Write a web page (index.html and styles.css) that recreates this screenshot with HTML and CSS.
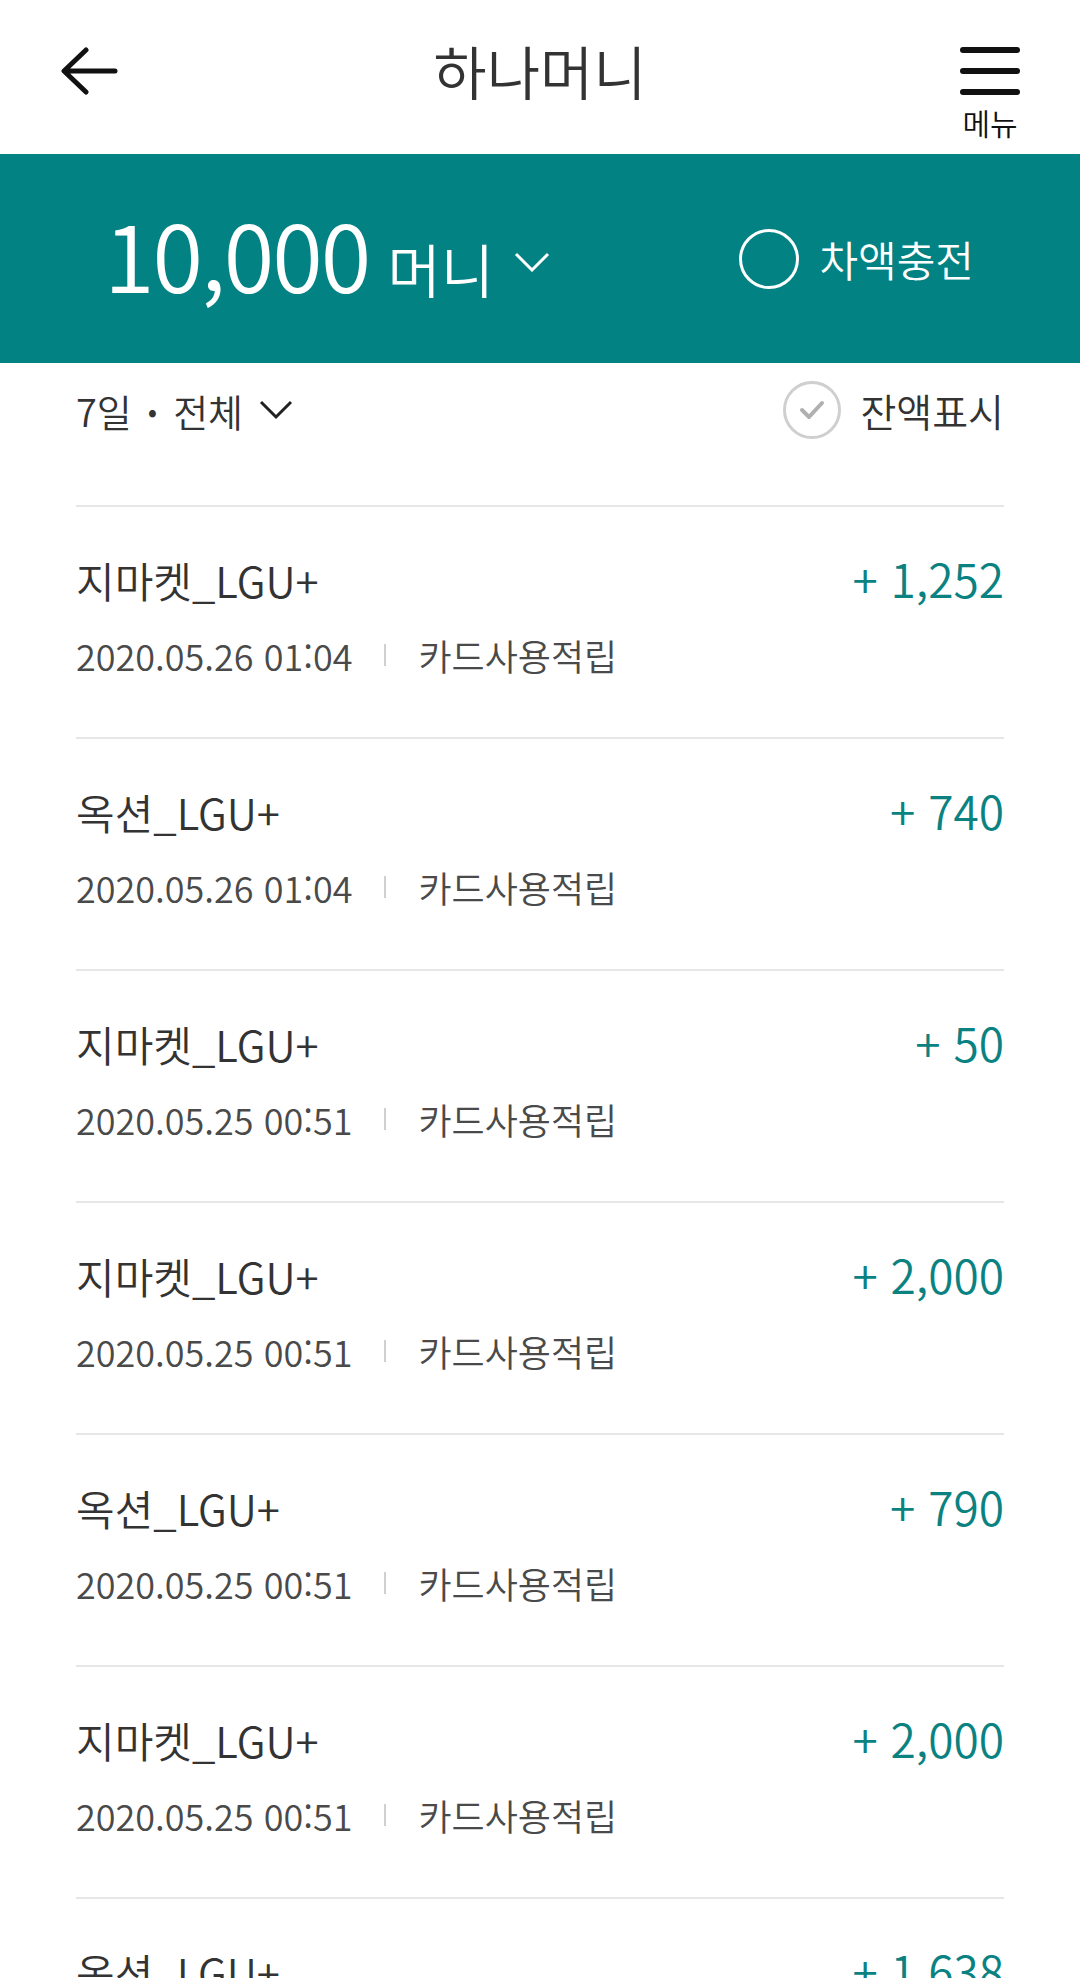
FILE: index.html
```html
<!DOCTYPE html>
<html lang="ko">
<head>
  <meta charset="UTF-8" />
  <meta name="viewport" content="width=device-width, initial-scale=1" />
  <title>하나머니</title>
  <link rel="stylesheet" href="styles.css">
</head>
<body>
  <div class="topbar">
    <button class="back" type="button" aria-label="뒤로">
      <svg width="58" height="48" viewBox="0 0 58 48">
        <path d="M55 24 H5 M26 3 L4 24 L26 45" fill="none" stroke="#111" stroke-width="5" stroke-linecap="round" stroke-linejoin="round" />
      </svg>
    </button>
    <h1 class="title">하나머니</h1>
    <div class="menu">
      <span class="bar"></span>
      <span class="bar"></span>
      <span class="bar"></span>
      <span class="menu-label">메뉴</span>
    </div>
  </div>

  <div class="balance">
    <div class="balance-left">
      <span class="amount">10,000</span>
      <span class="unit">머니</span>
      <svg class="chevron" width="36" height="20" viewBox="0 0 36 20">
        <polyline points="2,2 18,18 34,2" fill="none" stroke="#fff" stroke-width="3" />
      </svg>
    </div>
    <label class="charge">
      <span class="ring"></span>
      <span>차액충전</span>
    </label>
  </div>

  <div class="filter">
    <div class="period">
      <span>7일</span>
      <span class="dot">•</span>
      <span>전체</span>
      <svg width="34" height="20" viewBox="0 0 34 20">
        <polyline points="2,2 17,17 32,2" fill="none" stroke="#222" stroke-width="3" />
      </svg>
    </div>
    <div class="show-balance">
      <svg width="60" height="60" viewBox="0 0 60 60">
        <circle cx="30" cy="30" r="27.5" fill="none" stroke="#cfcfcf" stroke-width="3" />
        <path d="M20 30 L27 37 L40 23" fill="none" stroke="#b0b0b0" stroke-width="4" stroke-linecap="round" stroke-linejoin="round" />
      </svg>
      <span>잔액표시</span>
    </div>
  </div>

  <ul class="history">
    <li class="item">
      <div class="row">
        <span class="name">지마켓_LGU+</span>
        <span class="plus">+ 1,252</span>
      </div>
      <div class="meta"><span class="date">2020.05.26 01:04</span><i class="sep"></i><span>카드사용적립</span></div>
    </li>
    <li class="item">
      <div class="row">
        <span class="name">옥션_LGU+</span>
        <span class="plus">+ 740</span>
      </div>
      <div class="meta"><span class="date">2020.05.26 01:04</span><i class="sep"></i><span>카드사용적립</span></div>
    </li>
    <li class="item">
      <div class="row">
        <span class="name">지마켓_LGU+</span>
        <span class="plus">+ 50</span>
      </div>
      <div class="meta"><span class="date">2020.05.25 00:51</span><i class="sep"></i><span>카드사용적립</span></div>
    </li>
    <li class="item">
      <div class="row">
        <span class="name">지마켓_LGU+</span>
        <span class="plus">+ 2,000</span>
      </div>
      <div class="meta"><span class="date">2020.05.25 00:51</span><i class="sep"></i><span>카드사용적립</span></div>
    </li>
    <li class="item">
      <div class="row">
        <span class="name">옥션_LGU+</span>
        <span class="plus">+ 790</span>
      </div>
      <div class="meta"><span class="date">2020.05.25 00:51</span><i class="sep"></i><span>카드사용적립</span></div>
    </li>
    <li class="item">
      <div class="row">
        <span class="name">지마켓_LGU+</span>
        <span class="plus">+ 2,000</span>
      </div>
      <div class="meta"><span class="date">2020.05.25 00:51</span><i class="sep"></i><span>카드사용적립</span></div>
    </li>
    <li class="item">
      <div class="row">
        <span class="name">옥션_LGU+</span>
        <span class="plus">+ 1,638</span>
      </div>
      <div class="meta"><span class="date">2020.05.25 00:51</span><i class="sep"></i><span>카드사용적립</span></div>
    </li>
  </ul>
</body>
</html>
```

FILE: styles.css
```css
/* Reset */
* {
  margin: 0;
  padding: 0;
  box-sizing: border-box;
}
body {
  font-family: "Noto Sans CJK KR", "Noto Sans", sans-serif;
  font-weight: 350;
  background: #fff;
  color: #333;
  width: 1080px;
  overflow: hidden;
}

/* Top bar */
.topbar {
  height: 154px;
  display: grid;
  grid-template-columns: 1fr auto 1fr;
  align-items: start;
  padding: 40px 60px 0;
}
.back {
  justify-self: start;
  margin-top: 7px;
  background: none;
  border: none;
  display: block;
}
.back svg {
  display: block;
}
.title {
  font-size: 58px;
  font-weight: 350;
  line-height: 60px;
  color: #333;
}
.menu {
  justify-self: end;
  margin-top: 7px;
  width: 60px;
  display: flex;
  flex-direction: column;
  align-items: center;
  gap: 15px;
}
.bar {
  display: block;
  width: 60px;
  height: 6px;
  border-radius: 3px;
  background: #111;
}
.menu-label {
  font-size: 30px;
  line-height: 32px;
  color: #111;
  margin-top: -4px;
  white-space: nowrap;
}

/* Balance bar */
.balance {
  height: 209px;
  background: #038284;
  color: #fff;
  display: flex;
  align-items: center;
  justify-content: space-between;
  padding: 0 106px 0 104px;
}
.balance-left {
  display: flex;
  align-items: baseline;
}
.amount {
  font-size: 92px;
  line-height: 1;
  letter-spacing: -2px;
}
.unit {
  font-size: 58px;
  margin-left: 18px;
}
.chevron {
  margin-left: 20px;
  align-self: center;
  margin-top: 6px;
}
.charge {
  display: flex;
  align-items: center;
  gap: 20px;
  font-size: 42px;
}
.ring {
  width: 60px;
  height: 60px;
  border: 3px solid #fff;
  border-radius: 50%;
}

/* Filter row */
.filter {
  height: 94px;
  display: flex;
  align-items: center;
  justify-content: space-between;
  padding: 0 76px;
  margin-bottom: 48px;
  font-size: 38px;
  color: #333;
}
.period {
  display: flex;
  align-items: center;
}
.period .dot {
  margin: 0 16px;
  font-size: 28px;
}
.period svg {
  margin-left: 16px;
}
.show-balance {
  display: flex;
  align-items: center;
  gap: 18px;
}
.show-balance span {
  font-size: 39px;
}

/* History list */
.history {
  list-style: none;
  padding: 0 76px;
}
.item {
  height: 232px;
  border-top: 2px solid #e6e6e6;
  padding-top: 46px;
}
.row {
  display: flex;
  justify-content: space-between;
  align-items: baseline;
}
.name {
  font-size: 42px;
  line-height: 50px;
  color: #333;
}
.plus {
  font-size: 46px;
  line-height: 50px;
  color: #0b8282;
}
.meta {
  margin-top: 26px;
  display: flex;
  align-items: center;
  font-size: 36px;
  line-height: 48px;
  color: #4a4a4a;
}
.date {
  font-family: "Noto Sans CJK JP", "Noto Sans", sans-serif;
}
.sep {
  width: 2px;
  height: 22px;
  background: #d0d0d0;
  margin: 0 32px;
}
```
